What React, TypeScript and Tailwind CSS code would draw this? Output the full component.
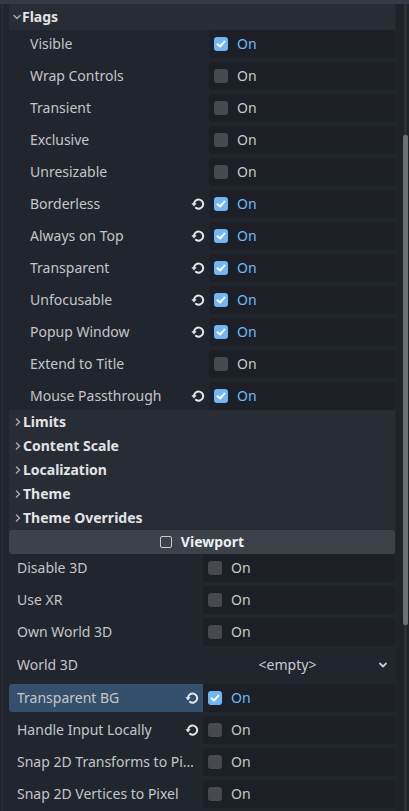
type Row = { label: string; on: boolean; revert?: boolean };

const flags: Row[] = [
  { label: "Visible", on: true },
  { label: "Wrap Controls", on: false },
  { label: "Transient", on: false },
  { label: "Exclusive", on: false },
  { label: "Unresizable", on: false },
  { label: "Borderless", on: true, revert: true },
  { label: "Always on Top", on: true, revert: true },
  { label: "Transparent", on: true, revert: true },
  { label: "Unfocusable", on: true, revert: true },
  { label: "Popup Window", on: true, revert: true },
  { label: "Extend to Title", on: false },
  { label: "Mouse Passthrough", on: true, revert: true },
];

const groups = ["Limits", "Content Scale", "Localization", "Theme", "Theme Overrides"];

function Caret({ open }: { open?: boolean }) {
  return (
    <svg width="8" height="8" viewBox="0 0 8 8" className="shrink-0">
      <path
        d={open ? "M1 2.5 L4 5.5 L7 2.5" : "M2.5 1 L5.5 4 L2.5 7"}
        fill="none"
        stroke="#a2a5aa"
        strokeWidth="1.6"
        strokeLinecap="round"
        strokeLinejoin="round"
      />
    </svg>
  );
}

function Check({ on }: { on: boolean }) {
  return (
    <div className="flex items-center gap-[9px]">
      {on ? (
        <div className="w-[14px] h-[14px] rounded-[3px] bg-[#6fb6f6] flex items-center justify-center">
          <svg width="10" height="10" viewBox="0 0 10 10">
            <path d="M1.6 5.2 L4 7.5 L8.4 2.6" fill="none" stroke="#fff" strokeWidth="2" strokeLinecap="round" strokeLinejoin="round" />
          </svg>
        </div>
      ) : (
        <div className="w-[14px] h-[14px] rounded-[3px] bg-[#46494f]" />
      )}
      <span className={on ? "text-[#70b9f8]" : "text-[#c8cacd]"}>On</span>
    </div>
  );
}

function Revert() {
  return (
    <svg width="14" height="14" viewBox="0 0 14 14" className="shrink-0">
      <path d="M3 7 A4.6 4.6 0 1 1 5 10.9" fill="none" stroke="#e6e7e9" strokeWidth="2" strokeLinecap="round" />
      <path d="M0.4 6.2 L5.6 6.2 L3 9.6 Z" fill="#e6e7e9" />
    </svg>
  );
}

function PropRow({ row, labelW, pad, hl }: { row: Row; labelW: string; pad: string; hl?: boolean }) {
  return (
    <div className="flex h-[28px]">
      <div className={`${labelW} ${pad} pr-[4px] flex items-center shrink-0 ${hl ? "bg-[#35506c] rounded-l-[3px]" : ""}`}>
        <span className="flex-1 truncate text-[#c4c6ca]">{row.label}</span>
        {row.revert && <Revert />}
      </div>
      <div className="flex-1 bg-[#1c1f25] rounded-[3px] flex items-center pl-[5px]">
        <Check on={row.on} />
      </div>
    </div>
  );
}

export default function App() {
  return (
    <div
      className="w-[409px] h-[811px] overflow-hidden bg-[#21252d] text-[14px] leading-[20px] flex flex-col"
      style={{ fontFamily: '"Noto Sans", "Open Sans", sans-serif' }}
    >
      <div className="h-[4px] bg-[#343a45] shrink-0" />
      <div className="flex flex-1 min-h-0">
        <div className="w-[396px] pl-[9px] pr-[1px] relative">
          <div className="absolute left-[2px] top-0 bottom-0 w-px bg-[#2b303a]" />

          {/* Flags */}
          <div className="h-[26px] bg-[#282c35] flex items-center pl-[4px] gap-[1px] text-[#e2e3e5] font-bold">
            <Caret open />
            <span>Flags</span>
          </div>
          <div className="flex flex-col gap-[4px]">
            {flags.map((r) => (
              <PropRow key={r.label} row={r} labelW="w-[200px]" pad="pl-[21px]" />
            ))}
          </div>

          {groups.map((g) => (
            <div key={g} className="h-[24px] bg-[#282c35] flex items-center pl-[5px] gap-[1px] text-[#e2e3e5] font-bold">
              <Caret />
              <span>{g}</span>
            </div>
          ))}

          {/* Viewport category */}
          <div className="h-[24px] bg-[#3d414a] rounded-[3px] flex items-center justify-center gap-[9px] text-[#eceef0] font-bold">
            <div className="w-[12px] h-[12px] border border-[#c9cbce] rounded-[2px]" />
            <span>Viewport</span>
          </div>

          <div className="flex flex-col gap-[4px]">
            <PropRow row={{ label: "Disable 3D", on: false }} labelW="w-[194px]" pad="pl-[8px]" />
            <PropRow row={{ label: "Use XR", on: false }} labelW="w-[194px]" pad="pl-[8px]" />
            <PropRow row={{ label: "Own World 3D", on: false }} labelW="w-[194px]" pad="pl-[8px]" />
            <div className="flex h-[30px]">
              <div className="w-[194px] pl-[8px] flex items-center text-[#c4c6ca]">World 3D</div>
              <div className="flex-1 flex items-center">
                <span className="flex-1 text-center text-[#c8cacd] pr-[6px]">&lt;empty&gt;</span>
                <svg width="10" height="10" viewBox="0 0 10 10" className="mr-[7px]">
                  <path d="M2 3.5 L5 6.5 L8 3.5" fill="none" stroke="#c8cacd" strokeWidth="1.8" strokeLinecap="round" strokeLinejoin="round" />
                </svg>
              </div>
            </div>
            <PropRow row={{ label: "Transparent BG", on: true, revert: true }} labelW="w-[194px]" pad="pl-[8px]" hl />
            <PropRow row={{ label: "Handle Input Locally", on: false, revert: true }} labelW="w-[194px]" pad="pl-[8px]" />
            <PropRow row={{ label: "Snap 2D Transforms to Pixel", on: false }} labelW="w-[194px]" pad="pl-[8px]" />
            <PropRow row={{ label: "Snap 2D Vertices to Pixel", on: false }} labelW="w-[194px]" pad="pl-[8px]" />
          </div>
        </div>

        {/* scrollbar */}
        <div className="flex-1 bg-[#1f2229] relative">
          <div className="absolute left-[8px] top-0 bottom-0 w-[3px] bg-[#2c3139]" />
          <div className="absolute left-[7px] top-[131px] h-[490px] w-[5px] rounded-[2px] bg-[#6b6f76]" />
        </div>
      </div>
    </div>
  );
}
